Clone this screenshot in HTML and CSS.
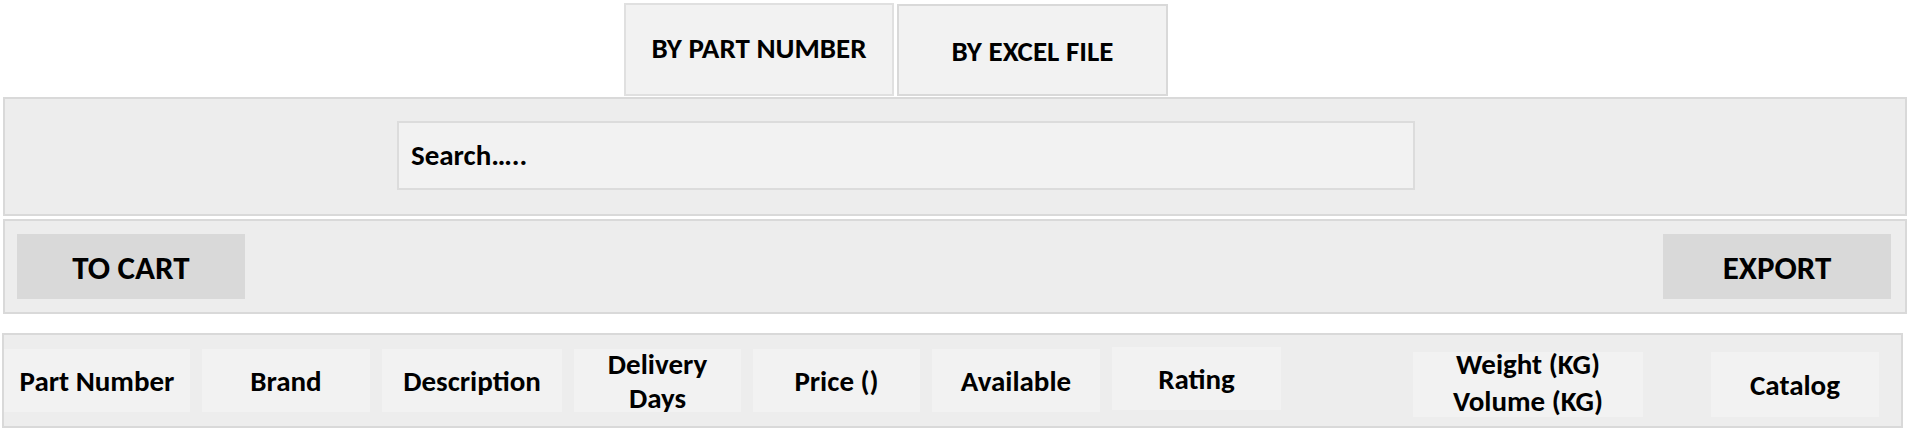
FILE: index.html
```html
<!DOCTYPE html>
<html lang="en">
<head>
  <meta charset="UTF-8" />
  <meta name="viewport" content="width=device-width, initial-scale=1.0"/>
  <title>Part Search</title>
  <link rel="stylesheet" href="styles.css">
</head>
<body>

  <div class="tabs">
    <button class="tab active">BY PART NUMBER</button>
    <button class="tab">BY EXCEL FILE</button>
  </div>

  <div class="panel search-panel">
    <input type="text" class="search" placeholder="Search….." />
  </div>

  <div class="panel actions">
    <button class="action">TO CART</button>
    <button class="action">EXPORT</button>
  </div>

  <div class="panel header-row">
    <div class="col col-part">Part Number</div>
    <div class="col col-brand">Brand</div>
    <div class="col col-desc">Description</div>
    <div class="col col-days">Delivery<br>Days</div>
    <div class="col col-price">Price ()</div>
    <div class="col col-avail">Available</div>
    <div class="col col-rating">Rating</div>
    <div class="col col-weight">Weight (KG)<br>Volume (KG)</div>
    <div class="col col-catalog">Catalog</div>
  </div>

</body>
</html>
```

FILE: styles.css
```css
:root {
  --panel: #ededed;
  --line: #d9d9d9;
  --cell: #f2f2f2;
  --button: #d9d9d9;
}

* {
  box-sizing: border-box;
  font-family: 'Carlito', 'Lato', sans-serif;
  font-weight: 700;
}

body {
  margin: 0;
  background: #fff;
  color: #000;
}

.tabs {
  display: flex;
  align-items: flex-end;
  gap: 3px;
  padding: 3px 0 0 624px;
}

.tab {
  width: 270px;
  height: 93px;
  background: var(--cell);
  border: 2px solid #e0e0e0;
  font-size: 29px;
  color: #000;
  padding: 0 0 4px;
}

.tab + .tab {
  width: 271px;
  height: 92px;
  border-color: var(--line);
  padding: 2px 0 0;
}

.panel {
  display: flex;
  align-items: center;
  background: var(--panel);
  border: 2px solid var(--line);
}

.search-panel {
  margin: 1px 1px 0 3px;
  height: 119px;
  padding-bottom: 2px;
}

.search {
  margin-left: 392px;
  width: 1018px;
  height: 69px;
  padding: 0 12px 2px;
  background: var(--cell);
  border: 2px solid #dcdcdc;
  outline: none;
  font-size: 29px;
  color: #000;
}

.search::placeholder {
  color: #000;
}

.actions {
  margin: 3px 1px 0 3px;
  height: 95px;
  padding: 0 14px 0 12px;
  justify-content: space-between;
}

.action {
  width: 228px;
  height: 65px;
  background: var(--button);
  border: none;
  font-size: 33px;
  color: #000;
  padding: 2px 0 0;
}

.header-row {
  margin: 19px 5px 0 2px;
  height: 95px;
  align-items: flex-start;
  gap: 12px;
}

.col {
  display: flex;
  align-items: center;
  justify-content: center;
  text-align: center;
  height: 63px;
  margin-top: 14px;
  background: var(--cell);
  font-size: 29px;
  line-height: 34px;
}

.col-part { width: 186px; }
.col-brand { width: 168px; }
.col-desc { width: 180px; }
.col-days { width: 167px; }
.col-price { width: 167px; }
.col-avail { width: 168px; }

.col-rating {
  width: 169px;
  margin-top: 12px;
}

.col-weight {
  width: 230px;
  height: 65px;
  margin-top: 17px;
  margin-left: 120px;
  padding-bottom: 3px;
  line-height: 37px;
}

.col-catalog {
  width: 168px;
  height: 65px;
  margin-top: 17px;
  margin-left: 56px;
}
```
